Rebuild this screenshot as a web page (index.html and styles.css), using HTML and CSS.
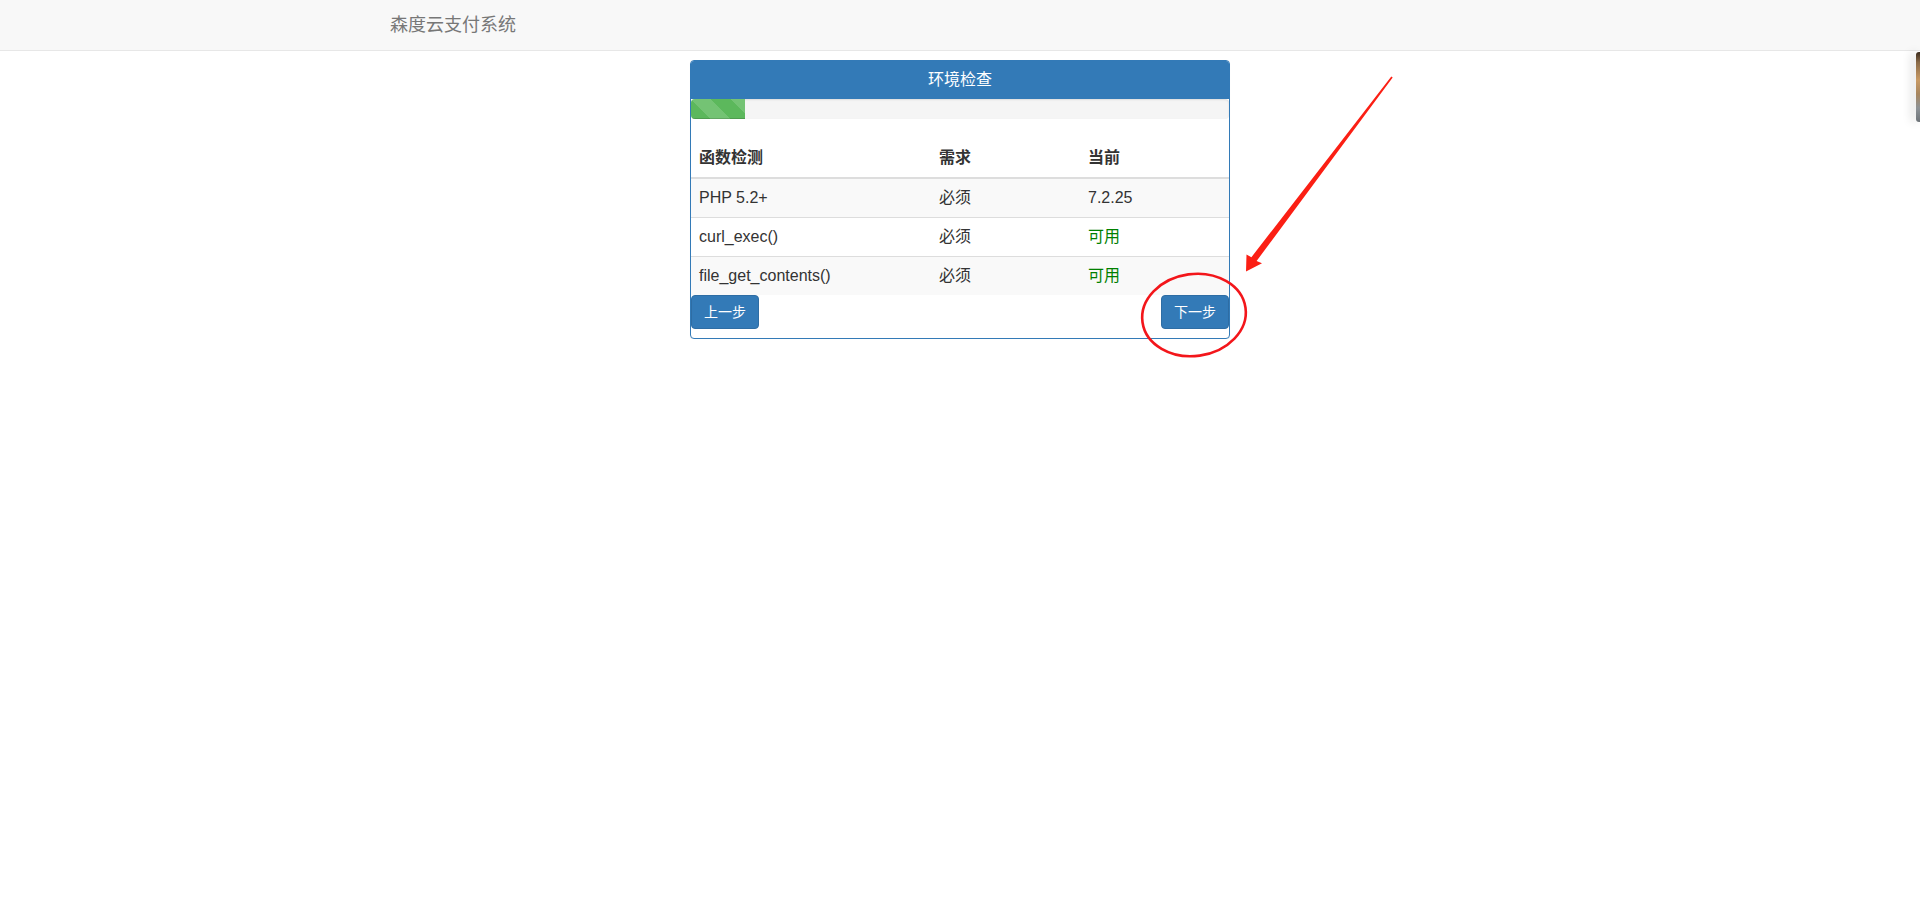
FILE: index.html
```html
<!DOCTYPE html>
<html lang="zh-CN">
<head>
<meta charset="utf-8">
<title>森度云支付系统</title>
<link rel="stylesheet" href="styles.css">
</head>
<body>
<nav class="navbar">
  <div class="container">
    <span class="brand">森度云支付系统</span>
  </div>
</nav>

<div class="panel">
  <div class="panel-heading"><h3 class="panel-title">环境检查</h3></div>
  <div class="progress"><div class="progress-bar" style="width: 10%"></div></div>
  <table class="table">
    <thead>
      <tr><th class="c1">函数检测</th><th class="c2">需求</th><th class="c3">当前</th></tr>
    </thead>
    <tbody>
      <tr class="odd"><td>PHP 5.2+</td><td>必须</td><td>7.2.25</td></tr>
      <tr><td>curl_exec()</td><td>必须</td><td class="ok">可用</td></tr>
      <tr class="odd"><td>file_get_contents()</td><td>必须</td><td class="ok">可用</td></tr>
    </tbody>
  </table>
  <div class="actions">
    <span class="btn">上一步</span>
    <span class="btn">下一步</span>
  </div>
</div>

<div class="side-widget"></div>

<svg class="annotation" width="1920" height="921" viewBox="0 0 1920 921" xmlns="http://www.w3.org/2000/svg">
  <polygon fill="#fb1f14" points="1391.3,76.4 1392.7,77.6 1256.6,261 1262,263.2 1246,271.5 1246.5,254.6 1251.4,257.2"/>
  <ellipse cx="1194" cy="315" rx="52" ry="41" fill="none" stroke="#f3161b" stroke-width="2.6" transform="rotate(-8 1194 315)"/>
</svg>
</body>
</html>
```
FILE: styles.css
```css
* { box-sizing: border-box; }

html, body {
  margin: 0;
  padding: 0;
}

body {
  font-family: "Liberation Sans", Arial, "Noto Sans CJK SC", sans-serif;
  font-size: 14px;
  line-height: 1.42857;
  color: #333;
  background: #fff;
}

.navbar {
  height: 51px;
  background: #f8f8f8;
  border-bottom: 1px solid #e7e7e7;
}

.container {
  width: 1170px;
  margin: 0 auto;
  padding: 0 15px;
}

.brand {
  display: inline-block;
  padding: 15px 0;
  font-size: 18px;
  line-height: 20px;
  color: #777;
}

.panel {
  width: 540px;
  margin: 9px auto 0;
  border: 1px solid #337ab7;
  border-radius: 4px;
  background: #fff;
  box-shadow: 0 1px 1px rgba(0, 0, 0, .05);
  padding-bottom: 9px;
}

.panel-heading {
  background: #337ab7;
  color: #fff;
  padding: 10px 15px;
  border-bottom: 1px solid #337ab7;
  border-radius: 3px 3px 0 0;
  text-align: center;
}

.panel-title {
  margin: 0;
  font-size: 16px;
  line-height: 17px;
  font-weight: normal;
}

.progress {
  height: 20px;
  margin-bottom: 20px;
  background: #f5f5f5;
  border-radius: 4px;
  overflow: hidden;
  box-shadow: inset 0 1px 2px rgba(0, 0, 0, .1);
}

.progress-bar {
  height: 100%;
  background-color: #5cb85c;
  background-image: linear-gradient(45deg, rgba(255,255,255,.15) 25%, transparent 25%, transparent 50%, rgba(255,255,255,.15) 50%, rgba(255,255,255,.15) 75%, transparent 75%, transparent);
  background-size: 40px 40px;
  box-shadow: inset 0 -1px 0 rgba(0, 0, 0, .15);
}

.table {
  width: 100%;
  border-collapse: collapse;
  border-spacing: 0;
  font-size: 16px;
  line-height: 22px;
}

.table th {
  text-align: left;
  font-weight: bold;
  padding: 8px;
  border-bottom: 2px solid #ddd;
  vertical-align: bottom;
}

.table td {
  padding: 8px;
  border-top: 1px solid #ddd;
}

.table tbody tr:first-child td { border-top: 0; }

.c1 { width: 240px; }
.c2 { width: 149px; }
.c3 { width: 149px; }

.table tr.odd td { background: #f9f9f9; }

.ok { color: #008000; }

.actions {
  display: flex;
  justify-content: space-between;
}

.btn {
  display: inline-block;
  padding: 6px 12px;
  font-size: 14px;
  line-height: 20px;
  color: #fff;
  background: #337ab7;
  border: 1px solid #2e6da4;
  border-radius: 4px;
}

.side-widget {
  position: absolute;
  top: 52px;
  right: 0;
  width: 4px;
  height: 70px;
  background: linear-gradient(180deg, #3a2a1c 0%, #8a6a48 15%, #c99a64 40%, #a8865e 60%, #8d9296 80%, #6d7378 100%);
  border-radius: 3px 0 0 3px;
  box-shadow: -4px 0 10px rgba(0, 0, 0, .18);
}

.annotation {
  position: absolute;
  top: 0;
  left: 0;
  pointer-events: none;
}
```
